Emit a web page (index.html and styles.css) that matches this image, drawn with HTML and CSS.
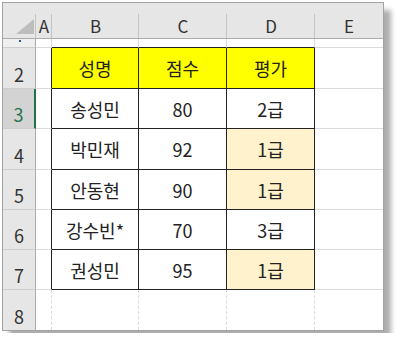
FILE: index.html
```html
<!DOCTYPE html>
<html lang="ko">

<head>
    <meta charset="UTF-8">
    <meta name="viewport" content="width=device-width, initial-scale=1.0">
    <title>성적 평가</title>
    <link rel="stylesheet" href="styles.css">
</head>

<body>
    <div class="sheet">
        <!-- 열 머리글 -->
        <div class="corner"><span class="select-all"></span></div>
        <div class="colhead">A</div>
        <div class="colhead">B</div>
        <div class="colhead">C</div>
        <div class="colhead">D</div>
        <div class="colhead last">E</div>

        <!-- 1행 (높이 축소) -->
        <div class="rowhead r1"><span class="dot"></span></div>
        <div class="cell"></div>
        <div class="cell edge-b"></div>
        <div class="cell edge-b"></div>
        <div class="cell edge-b"></div>
        <div class="cell last"></div>

        <!-- 2행: 표 머리글 -->
        <div class="rowhead">2</div>
        <div class="cell edge-r"></div>
        <div class="cell tb hd">성명</div>
        <div class="cell tb hd">점수</div>
        <div class="cell tb hd">평가</div>
        <div class="cell last"></div>

        <div class="rowhead active">3</div>
        <div class="cell edge-r"></div>
        <div class="cell tb">송성민</div>
        <div class="cell tb">80</div>
        <div class="cell tb">2급</div>
        <div class="cell last"></div>

        <div class="rowhead">4</div>
        <div class="cell edge-r"></div>
        <div class="cell tb">박민재</div>
        <div class="cell tb">92</div>
        <div class="cell tb hi">1급</div>
        <div class="cell last"></div>

        <div class="rowhead">5</div>
        <div class="cell edge-r"></div>
        <div class="cell tb">안동현</div>
        <div class="cell tb">90</div>
        <div class="cell tb hi">1급</div>
        <div class="cell last"></div>

        <div class="rowhead">6</div>
        <div class="cell edge-r"></div>
        <div class="cell tb">강수빈*</div>
        <div class="cell tb">70</div>
        <div class="cell tb">3급</div>
        <div class="cell last"></div>

        <div class="rowhead">7</div>
        <div class="cell edge-r"></div>
        <div class="cell tb">권성민</div>
        <div class="cell tb">95</div>
        <div class="cell tb hi">1급</div>
        <div class="cell last"></div>

        <div class="rowhead end">8</div>
        <div class="cell end"></div>
        <div class="cell end"></div>
        <div class="cell end"></div>
        <div class="cell end"></div>
        <div class="cell end last"></div>
    </div>
</body>

</html>
```

FILE: styles.css
```css
/* 기본 스타일 초기화 */
* {
    margin: 0;
    padding: 0;
    box-sizing: border-box;
}

body {
    background: #fff;
    font-family: "Noto Sans CJK KR", "Noto Sans", sans-serif;
    color: #222;
    padding: 2px;
}

/* 시트 전체 틀 */
.sheet {
    display: grid;
    grid-template-columns: 33px 16px 87px 88px 88px 68px;
    grid-template-rows: 36px 9px 41px 40px 41px 40px 40px 40px 40px;
    width: 382px;
    border: 1px solid #a3a3a3;
    background: #fff;
    box-shadow: 7px 8px 5px rgba(0, 0, 0, 0.32);
}

/* 열 머리글 */
.corner,
.colhead {
    background-color: #e6e6e6;
    background-image: linear-gradient(#c4c4c4, #c4c4c4);
    background-repeat: no-repeat;
    background-position: right bottom;
    background-size: 1px 70%;
    border-bottom: 1px solid #ababab;
}

.colhead {
    display: flex;
    align-items: flex-end;
    justify-content: center;
    padding-bottom: 4px;
    font-size: 17px;
    line-height: 1;
    color: #333;
}

.colhead.last {
    background-image: none;
}

.corner {
    display: flex;
    align-items: flex-end;
    justify-content: flex-end;
    padding: 0 2px 4px 0;
}

.select-all {
    width: 18px;
    height: 15px;
    background: #bdbdbd;
    clip-path: polygon(100% 0, 100% 100%, 0 100%);
}

/* 행 머리글 */
.rowhead {
    background: #e6e6e6;
    border-right: 1px solid #ababab;
    border-bottom: 1px solid #cdcdcd;
    display: flex;
    align-items: flex-end;
    justify-content: center;
    padding-bottom: 5px;
    font-size: 18px;
    line-height: 1;
    color: #333;
}

.rowhead.r1 {
    background: #efefef;
    align-items: flex-start;
    justify-content: flex-start;
    padding: 1px 0 0 16px;
}

.dot {
    width: 2px;
    height: 2px;
    background: #35509a;
}

/* 선택된 행 */
.rowhead.active {
    background: #d3d3d3;
    border-right: 2px solid #217346;
    color: #217346;
}

.rowhead.end {
    border-bottom: none;
}

/* 셀 */
.cell {
    border-right: 1px solid #dadada;
    border-bottom: 1px solid #dadada;
    display: flex;
    align-items: center;
    justify-content: center;
    font-size: 18px;
    line-height: 1;
}

.cell.last {
    border-right: none;
}

.cell.end {
    border-bottom: none;
    border-right-style: dashed;
}

.cell.end.last {
    border-right: none;
}

/* 표 테두리 */
.cell.edge-b {
    border-bottom-color: #222;
}

.cell.edge-r {
    border-right-color: #222;
}

.cell.tb {
    border-right-color: #222;
    border-bottom-color: #222;
}

.cell.hd {
    background: #ffff00;
}

.cell.hi {
    background: #fff2cc;
}
```
